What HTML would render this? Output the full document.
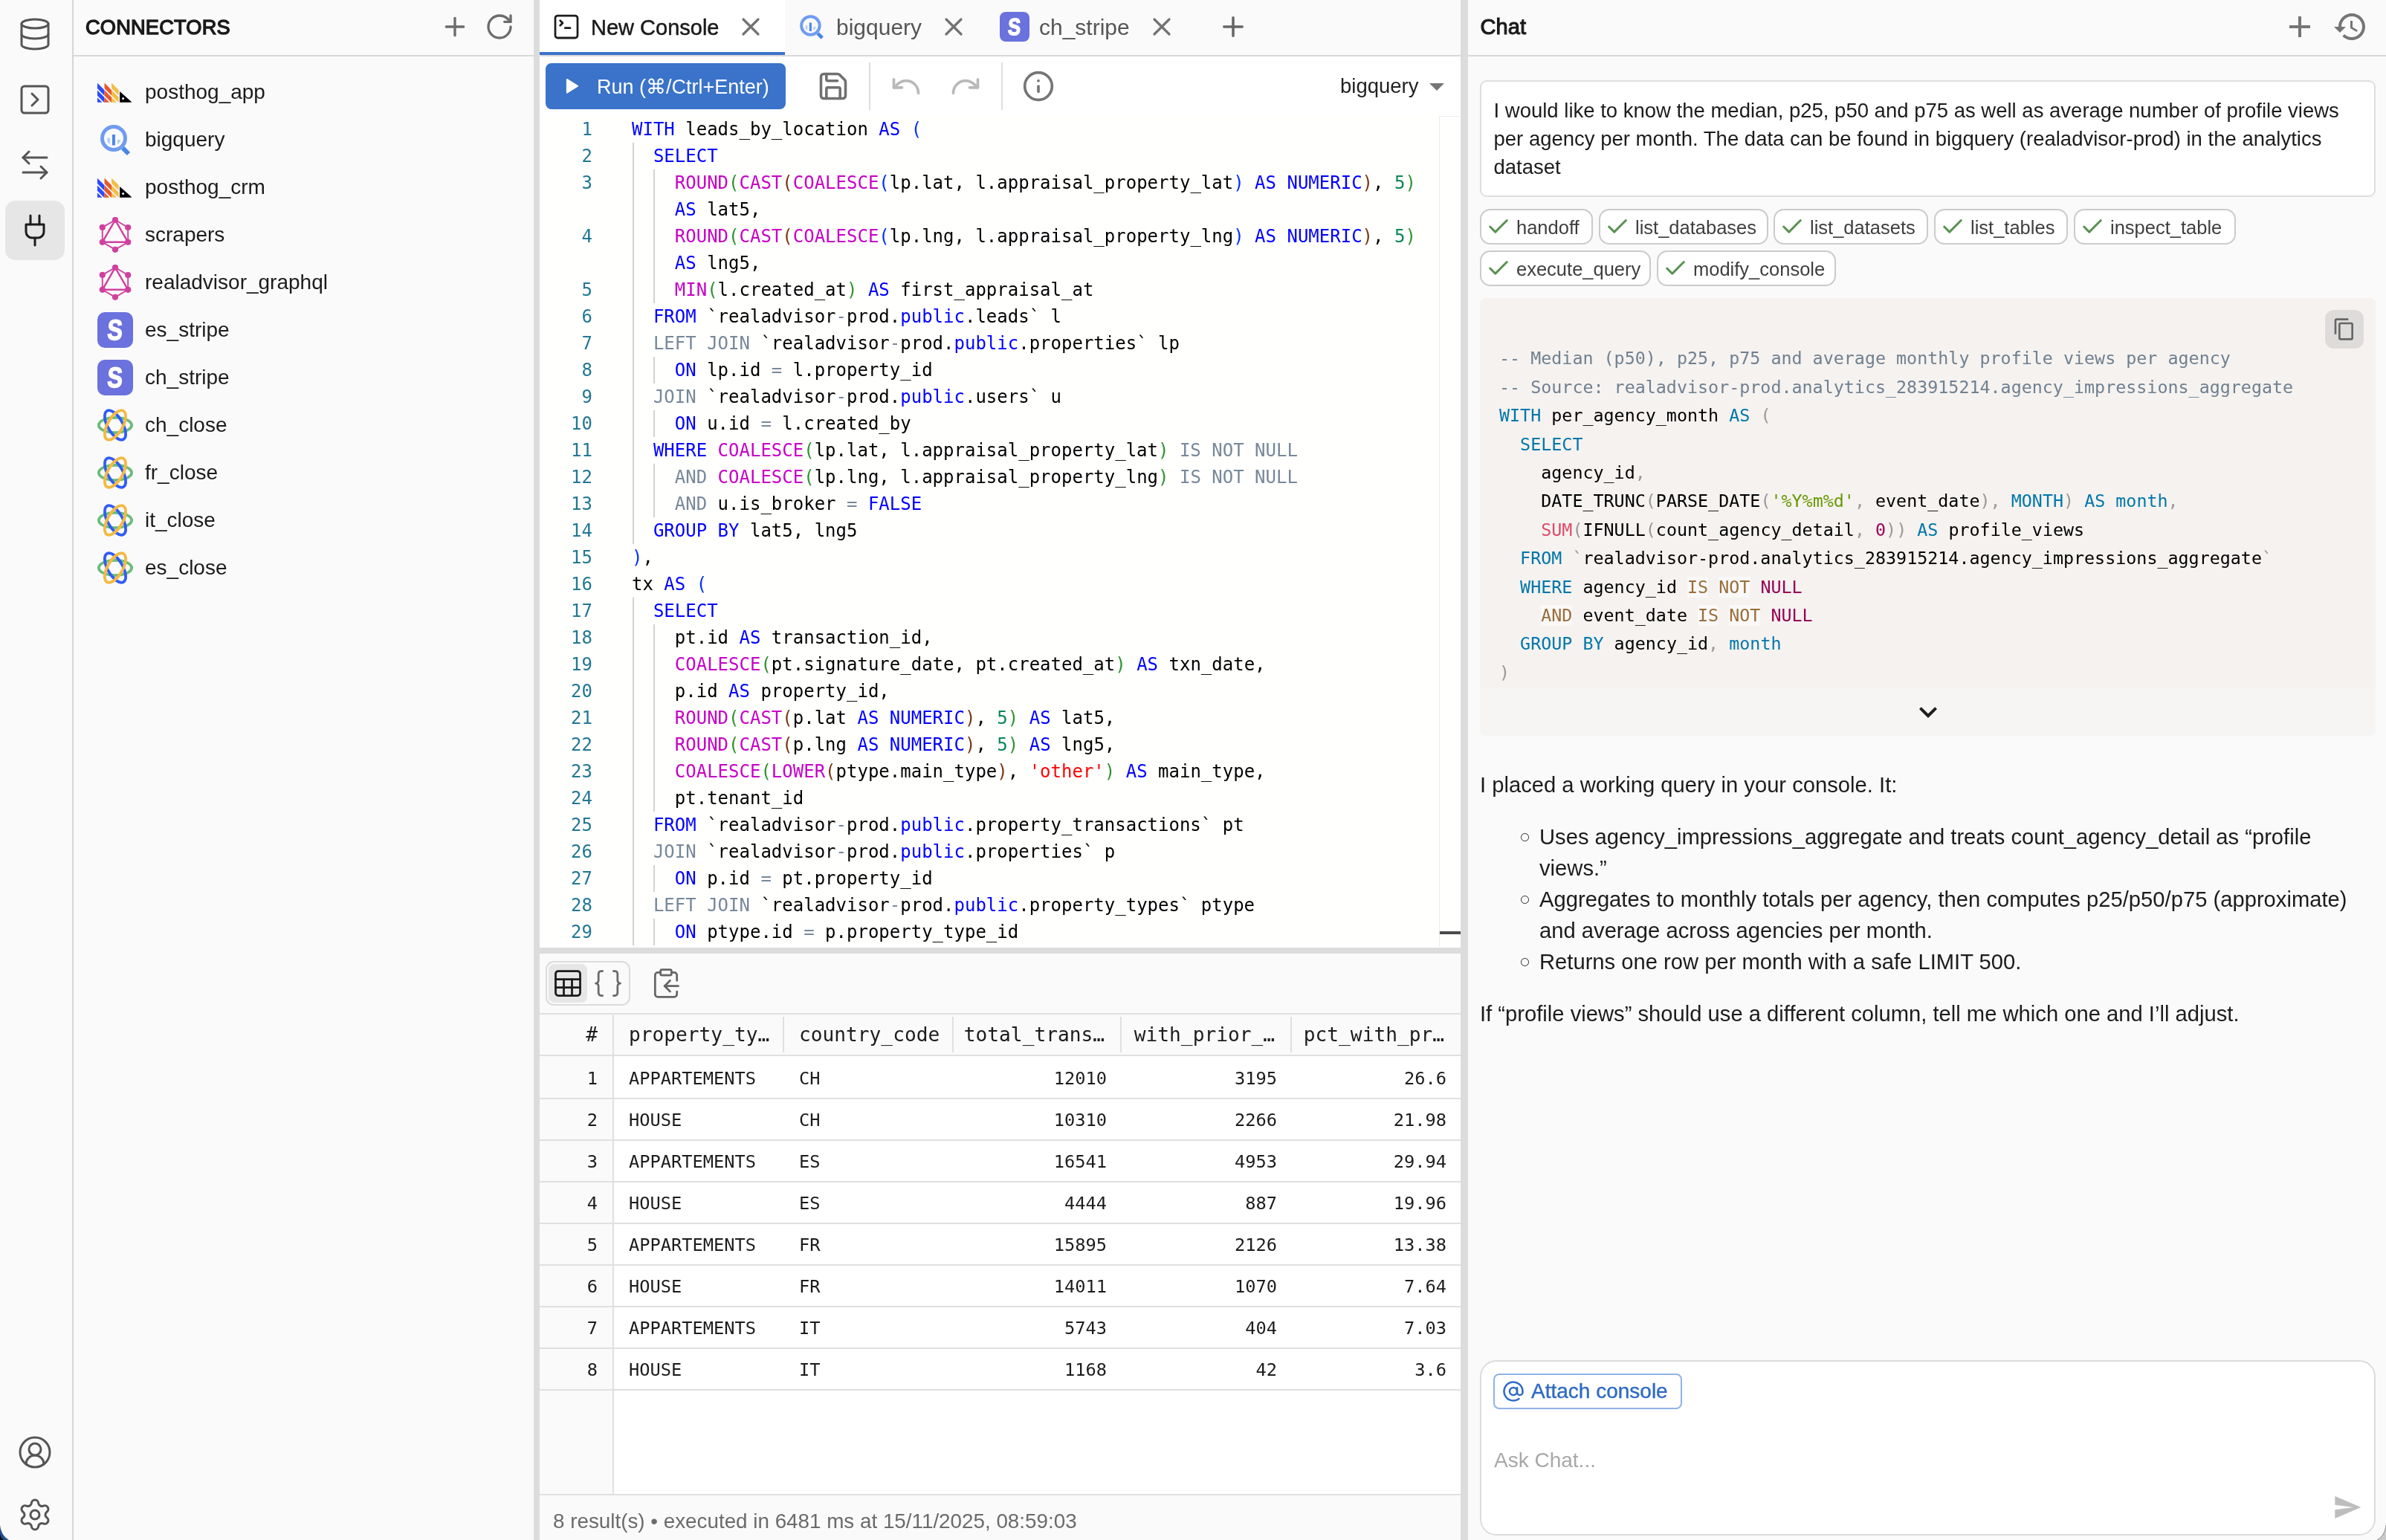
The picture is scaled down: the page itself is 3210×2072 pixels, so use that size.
<!DOCTYPE html>
<html lang="en"><head><meta charset="utf-8"><title>Console</title>
<style>
*{box-sizing:border-box;margin:0;padding:0}
html,body{width:3210px;height:2072px;background:#fafafa}
body{font-family:"Liberation Sans",sans-serif;font-size:28px;color:#1c1c1c;position:relative}
svg{display:block}
.abs{position:absolute}
#rail,#conn,#ed,#chat{will-change:transform;overflow:hidden}
.ic{fill:none;stroke:currentColor;stroke-width:1.5;stroke-linecap:round;stroke-linejoin:round}
/* rail */
#rail{position:absolute;left:0;top:0;width:99px;height:2072px;background:#fafafa;border-right:2px solid #d6d6d6}
#rail svg{position:absolute;left:23px;width:48px;height:48px;color:#555}
#rail .sel{position:absolute;left:7px;top:270px;width:80px;height:80px;border-radius:14px;background:#e6e6e6}
/* connectors */
#conn{position:absolute;left:99px;top:0;width:619px;height:2072px;background:#fafafa}
.hdr{position:absolute;left:0;top:0;right:0;height:76px;border-bottom:2px solid #d9d9d9}
#conn .title{position:absolute;left:16px;top:0;line-height:73px;font-weight:400;font-size:27.2px;letter-spacing:.2px;color:#1a1a1a;-webkit-text-stroke:1.35px #1a1a1a}
#conn .hdr svg{position:absolute;top:16px;width:40px;height:40px;color:#6c6c6c;stroke-width:2}
.row{position:absolute;left:0;height:64px;width:619px}
.row svg,.row .sq{position:absolute;left:32px;top:8px;width:48px;height:48px}
.row span{position:absolute;left:96px;top:0;line-height:64px;font-size:28px;color:#1c1c1c;white-space:nowrap}
.sq{background:#6b71dd;border-radius:10px;color:#fff;font-weight:700;font-size:38.4px;text-align:center;line-height:48px}
.sq b{display:inline-block;transform:scaleX(.8) skewX(-4deg);-webkit-text-stroke:1.5px #fff}
.split{position:absolute;background:#dcdcdc}
/* editor */
#ed{position:absolute;left:726px;top:0;width:1239px;height:2072px;background:#fafafa}
#tabs{position:absolute;left:1px;top:0;right:0;box-shadow:-1px 0 0 #fafafa;height:76px;border-bottom:2px solid #d9d9d9;background:#fafafa}
.tab{position:absolute;top:0;height:74px;line-height:74px;font-size:28px;white-space:nowrap}
.tab.act{background:#fff;border-bottom:4px solid #3b74cb;color:#1a1a1a}
#tb{position:absolute;left:1px;top:76px;right:0;height:80px;background:#fff;box-shadow:-1px 0 0 #fff}
#run{position:absolute;left:7px;top:9px;width:323px;height:62px;border-radius:8px;background:#3a73c9;color:#fff;font-size:27px;line-height:62px;white-space:nowrap}
#code{position:absolute;left:1px;box-shadow:-1px 0 0 #fffffe;top:156px;width:1238px;height:1119px;background:#fffffe;overflow:hidden;font-family:"DejaVu Sans Mono","Liberation Mono",monospace;font-size:24px;line-height:36px}
.ln{position:absolute;left:0;width:70px;text-align:right;color:#237893;height:36px}
.cl{position:absolute;left:123px;height:36px;white-space:pre;color:#000}
.g{position:absolute;width:2px;background:#d3d3d3}
.k{color:#0000ff}.o{color:#778899}.p{color:#c700c7}.s{color:#ff0000}.n{color:#098658}
.b1{color:#0431fa}.b2{color:#319331}.b3{color:#7b3814}
/* results */
#res{position:absolute;left:1px;box-shadow:-1px 0 0 #fafafa;top:1283px;width:1238px;height:789px;background:#fafafa}
#tbl{position:absolute;left:0;top:82px;width:1238px;font-family:"DejaVu Sans Mono","Liberation Mono",monospace}
.tr{position:absolute;left:0;width:1238px;height:56px;border-bottom:2px solid #e0e0e0;background:#fff}
.tr div{position:absolute;top:0;height:54px;line-height:54px;font-size:25px;white-space:nowrap;color:#1c1c1c}
/* chat */
#chat{position:absolute;left:1975px;top:0;width:1235px;height:2072px;background:#fafafa}
#chat .title{position:absolute;left:16.5px;top:0;line-height:72px;font-weight:400;font-size:29px;letter-spacing:.1px;color:#1a1a1a;-webkit-text-stroke:1.1px #1a1a1a}
#umsg{position:absolute;left:16px;top:108px;width:1205px;height:157px;border:2px solid #dedede;border-radius:9px;background:#fff;padding:20px 17px 0 16.5px;font-size:27.5px;line-height:38px;color:#1c1c1c}
.chip{position:absolute;height:48px;border:2px solid #cbcbcb;border-radius:14px;background:#fff;font-size:25.5px;line-height:44px;color:#3e3e3e;white-space:nowrap}
.chip svg{position:absolute;left:6px;top:5px;width:34px;height:34px;color:#5a9152;stroke-width:2.1}
.chip span{position:absolute;left:47px;top:1px}
#cb{position:absolute;left:16px;top:401px;width:1205px;height:525px;background:#f5f2f0;border-radius:8px 8px 0 0;font-family:"DejaVu Sans Mono","Liberation Mono",monospace;font-size:23.35px;line-height:38.4px}
#cb .l{position:absolute;left:26px;white-space:pre;color:#000;height:38.4px}
.c{color:#708090}.pk{color:#0077aa}.pp{color:#999}.ps{color:#669900}.pn{color:#990055}.pf{color:#dd4a68}.po{color:#9a6e3a;background:rgba(255,255,255,.5)}
#cbx{position:absolute;left:16px;top:926px;width:1205px;height:64px;background:#f6f5f4;border-radius:0 0 8px 8px}
.md{position:absolute;font-size:29.2px;line-height:42px;color:#1c1c1c;white-space:nowrap}
#inp{position:absolute;left:16px;top:1830px;width:1205px;height:236px;border:2px solid #dcdcdc;border-radius:22px;background:#fff}
#att{position:absolute;left:16px;top:16px;width:254px;height:48px;border:2px solid #8fb3e8;border-radius:8px;color:#2f6bc4;font-size:28px;line-height:44px;font-weight:400}
</style></head>
<body>
<div id="rail"><div class="sel"></div>
<svg class="ic" viewBox="0 0 24 24" style="top:22px;"><ellipse cx="12" cy="5" rx="9" ry="3"/><path d="M3 5V19A9 3 0 0 0 21 19V5"/><path d="M3 12A9 3 0 0 0 21 12"/></svg>
<svg class="ic" viewBox="0 0 24 24" style="top:110px;"><rect width="18" height="18" x="3" y="3" rx="2"/><path d="m10 8 4 4-4 4"/></svg>
<svg class="ic" viewBox="0 0 24 24" style="top:198px;"><path d="M8 3 4 7l4 4"/><path d="M4 7h16"/><path d="m16 21 4-4-4-4"/><path d="M20 17H4"/></svg>
<svg class="ic" viewBox="0 0 24 24" style="top:286px;color:#1c1c1c;"><path d="M12 22v-5"/><path d="M9 8V2"/><path d="M15 8V2"/><path d="M18 8v5a4 4 0 0 1-4 4h-4a4 4 0 0 1-4-4V8Z"/></svg>
<svg class="ic" viewBox="0 0 24 24" style="top:1930px;"><path d="M18 20a6 6 0 0 0-12 0"/><circle cx="12" cy="10" r="4"/><circle cx="12" cy="12" r="10"/></svg>
<svg class="ic" viewBox="0 0 24 24" style="top:2014px;"><path d="M9.671 4.136a2.34 2.34 0 0 1 4.659 0 2.34 2.34 0 0 0 3.319 1.915 2.34 2.34 0 0 1 2.33 4.033 2.34 2.34 0 0 0 0 3.831 2.34 2.34 0 0 1-2.33 4.033 2.34 2.34 0 0 0-3.319 1.915 2.34 2.34 0 0 1-4.659 0 2.34 2.34 0 0 0-3.32-1.915 2.34 2.34 0 0 1-2.33-4.033 2.34 2.34 0 0 0 0-3.831A2.34 2.34 0 0 1 6.35 6.051a2.34 2.34 0 0 0 3.319-1.915"/><circle cx="12" cy="12" r="3"/></svg>
</div>
<div id="conn"><div class="hdr"><div class="title">CONNECTORS</div>
<svg class="ic" viewBox="0 0 24 24" style="left:493px;top:16px"><path d="M5 12h14"/><path d="M12 5v14"/></svg>
<svg class="ic" viewBox="0 0 24 24" style="left:553px"><path d="M21 12a9 9 0 1 1-9-9c2.52 0 4.93 1 6.74 2.74L21 8"/><path d="M21 3v5h-5"/></svg>
</div>
<div class="row" style="top:92px">
<svg viewBox="0 0 48 48"><g transform="translate(0 11.8)"><path fill="#2b4bff" d="M0.00 0.00 9.55 9.55 9.55 16.85 0.00 7.30zM0.00 9.75 9.55 19.30 9.55 26.00 8.95 26.00 0.00 17.05zM0.00 19.50 6.50 26.00 0.00 26.00z"/><path fill="#e8582a" d="M9.55 -0.20 19.10 9.35 19.10 16.65 9.55 7.10zM9.55 9.55 19.10 19.10 19.10 26.00 18.70 26.00 9.55 16.85zM9.55 19.30 16.25 26.00 9.55 26.00z"/><path fill="#f4bd48" d="M19.10 -0.40 28.65 9.15 28.65 16.45 19.10 6.90zM19.10 9.35 28.65 18.90 28.65 26.00 28.45 26.00 19.10 16.65zM19.10 19.10 26.00 26.00 19.10 26.00z"/><path fill="#000" d="M30.1 11.1 44.8 24.2Q46 25.3 46 26H30.1z"/><circle cx="34.6" cy="20.8" r="1.5" fill="#fff"/></g></svg>
<span>posthog_app</span></div>
<div class="row" style="top:156px">
<svg viewBox="0 0 48 48"><path d="M34.2 35.2 42 43" stroke="#4a86ea" stroke-width="6" stroke-linecap="butt"/><circle cx="22" cy="22" r="15.5" fill="none" stroke="#6f9cf1" stroke-width="5"/><path d="M13.5 21.8h3.4v8.2a12 12 0 0 1-3.4-3.2z" fill="#b4cdf9"/><rect x="20" y="17" width="3.9" height="14.5" fill="#4a86ea"/><path d="M27 23.9h3.8v2.6a12 12 0 0 1-3.8 3.6z" fill="#b4cdf9"/></svg>
<span>bigquery</span></div>
<div class="row" style="top:220px">
<svg viewBox="0 0 48 48"><g transform="translate(0 11.8)"><path fill="#2b4bff" d="M0.00 0.00 9.55 9.55 9.55 16.85 0.00 7.30zM0.00 9.75 9.55 19.30 9.55 26.00 8.95 26.00 0.00 17.05zM0.00 19.50 6.50 26.00 0.00 26.00z"/><path fill="#e8582a" d="M9.55 -0.20 19.10 9.35 19.10 16.65 9.55 7.10zM9.55 9.55 19.10 19.10 19.10 26.00 18.70 26.00 9.55 16.85zM9.55 19.30 16.25 26.00 9.55 26.00z"/><path fill="#f4bd48" d="M19.10 -0.40 28.65 9.15 28.65 16.45 19.10 6.90zM19.10 9.35 28.65 18.90 28.65 26.00 28.45 26.00 19.10 16.65zM19.10 19.10 26.00 26.00 19.10 26.00z"/><path fill="#000" d="M30.1 11.1 44.8 24.2Q46 25.3 46 26H30.1z"/><circle cx="34.6" cy="20.8" r="1.5" fill="#fff"/></g></svg>
<span>posthog_crm</span></div>
<div class="row" style="top:284px">
<svg viewBox="0 0 48 48"><g fill="none" stroke="#d0409f"><polygon points="24.0,4.0 41.2,14.0 41.2,33.8 24.0,43.8 6.8,33.8 6.8,13.9" stroke-width="1.9"/><polygon points="24.0,4.0 41.2,33.8 6.8,33.8" stroke-width="2.4"/></g><circle cx="24.0" cy="4.0" r="4.1" fill="#d0409f"/><circle cx="41.2" cy="14.0" r="4.1" fill="#d0409f"/><circle cx="41.2" cy="33.8" r="4.1" fill="#d0409f"/><circle cx="24.0" cy="43.8" r="4.1" fill="#d0409f"/><circle cx="6.8" cy="33.8" r="4.1" fill="#d0409f"/><circle cx="6.8" cy="13.9" r="4.1" fill="#d0409f"/></svg>
<span>scrapers</span></div>
<div class="row" style="top:348px">
<svg viewBox="0 0 48 48"><g fill="none" stroke="#d0409f"><polygon points="24.0,4.0 41.2,14.0 41.2,33.8 24.0,43.8 6.8,33.8 6.8,13.9" stroke-width="1.9"/><polygon points="24.0,4.0 41.2,33.8 6.8,33.8" stroke-width="2.4"/></g><circle cx="24.0" cy="4.0" r="4.1" fill="#d0409f"/><circle cx="41.2" cy="14.0" r="4.1" fill="#d0409f"/><circle cx="41.2" cy="33.8" r="4.1" fill="#d0409f"/><circle cx="24.0" cy="43.8" r="4.1" fill="#d0409f"/><circle cx="6.8" cy="33.8" r="4.1" fill="#d0409f"/><circle cx="6.8" cy="13.9" r="4.1" fill="#d0409f"/></svg>
<span>realadvisor_graphql</span></div>
<div class="row" style="top:412px">
<div class="sq"><b>S</b></div>
<span>es_stripe</span></div>
<div class="row" style="top:476px">
<div class="sq"><b>S</b></div>
<span>ch_stripe</span></div>
<div class="row" style="top:540px">
<svg viewBox="0 0 48 48"><g fill="none" stroke-width="3.8"><ellipse cx="24" cy="24" rx="22.1" ry="10.1" stroke="#6cbb7a"/><ellipse cx="24" cy="24" rx="22.1" ry="10.1" stroke="#2f5cf6" transform="rotate(60 24 24)"/><ellipse cx="24" cy="24" rx="22.1" ry="10.1" stroke="#f4b942" transform="rotate(-60 24 24)"/></g></svg>
<span>ch_close</span></div>
<div class="row" style="top:604px">
<svg viewBox="0 0 48 48"><g fill="none" stroke-width="3.8"><ellipse cx="24" cy="24" rx="22.1" ry="10.1" stroke="#6cbb7a"/><ellipse cx="24" cy="24" rx="22.1" ry="10.1" stroke="#2f5cf6" transform="rotate(60 24 24)"/><ellipse cx="24" cy="24" rx="22.1" ry="10.1" stroke="#f4b942" transform="rotate(-60 24 24)"/></g></svg>
<span>fr_close</span></div>
<div class="row" style="top:668px">
<svg viewBox="0 0 48 48"><g fill="none" stroke-width="3.8"><ellipse cx="24" cy="24" rx="22.1" ry="10.1" stroke="#6cbb7a"/><ellipse cx="24" cy="24" rx="22.1" ry="10.1" stroke="#2f5cf6" transform="rotate(60 24 24)"/><ellipse cx="24" cy="24" rx="22.1" ry="10.1" stroke="#f4b942" transform="rotate(-60 24 24)"/></g></svg>
<span>it_close</span></div>
<div class="row" style="top:732px">
<svg viewBox="0 0 48 48"><g fill="none" stroke-width="3.8"><ellipse cx="24" cy="24" rx="22.1" ry="10.1" stroke="#6cbb7a"/><ellipse cx="24" cy="24" rx="22.1" ry="10.1" stroke="#2f5cf6" transform="rotate(60 24 24)"/><ellipse cx="24" cy="24" rx="22.1" ry="10.1" stroke="#f4b942" transform="rotate(-60 24 24)"/></g></svg>
<span>es_close</span></div>
</div>
<div class="split" style="left:718px;top:0;width:8px;height:2072px"></div>
<div id="ed">
<div id="tabs">
  <div class="tab act" style="left:-1px;width:330px"><svg class="ic" viewBox="0 0 24 24" style="position:absolute;left:16px;top:16px;width:40px;height:40px;color:#1c1c1c;stroke-width:1.65"><path d="m7 11 2-2-2-2"/><path d="M11 13h4"/><rect width="18" height="18" x="3" y="3" rx="2" ry="2"/></svg><span id="t1" style="position:absolute;left:69px;font-size:29px;-webkit-text-stroke:.5px #1a1a1a">New Console</span><svg class="ic" viewBox="0 0 24 24" style="position:absolute;left:264px;top:16px;width:40px;height:40px;color:#737373;stroke-width:1.95"><path d="M18 6 6 18"/><path d="m6 6 12 12"/></svg></div>
  <div class="tab" style="left:329px;width:270px;color:#555"><svg viewBox="0 0 48 48" style="position:absolute;left:346px;top:17px;width:38px;height:38px;left:17px"><path d="M34.2 35.2 42 43" stroke="#4a86ea" stroke-width="6" stroke-linecap="butt"/><circle cx="22" cy="22" r="15.5" fill="none" stroke="#6f9cf1" stroke-width="5"/><path d="M13.5 21.8h3.4v8.2a12 12 0 0 1-3.4-3.2z" fill="#b4cdf9"/><rect x="20" y="17" width="3.9" height="14.5" fill="#4a86ea"/><path d="M27 23.9h3.8v2.6a12 12 0 0 1-3.8 3.6z" fill="#b4cdf9"/></svg><span id="t2" style="position:absolute;left:69px;font-size:30px">bigquery</span><svg class="ic" viewBox="0 0 24 24" style="position:absolute;left:207px;top:16px;width:40px;height:40px;color:#737373;stroke-width:1.95"><path d="M18 6 6 18"/><path d="m6 6 12 12"/></svg></div>
  <div class="tab" style="left:599px;width:280px;color:#555"><div class="sq" style="position:absolute;left:19px;top:16px;width:40px;height:40px;line-height:40px;font-size:32px;border-radius:8px"><b>S</b></div><span id="t3" style="position:absolute;left:72px;font-size:30px">ch_stripe</span><svg class="ic" viewBox="0 0 24 24" style="position:absolute;left:217px;top:16px;width:40px;height:40px;color:#737373;stroke-width:1.95"><path d="M18 6 6 18"/><path d="m6 6 12 12"/></svg></div>
  <svg class="ic" viewBox="0 0 24 24" style="position:absolute;left:911px;top:15px;width:42px;height:42px;color:#666;stroke-width:2"><path d="M5 12h14"/><path d="M12 5v14"/></svg>
</div>
<div id="tb">
  <div id="run"><svg viewBox="0 0 20 24" style="position:absolute;left:27px;top:20px;width:18px;height:21.6px"><path d="M2 2 18 12 2 22z" fill="#fff" stroke="#fff" stroke-width="2" stroke-linejoin="round"/></svg><span id="runt" style="position:absolute;left:69px;top:1px">Run (&#8984;/Ctrl+Enter)</span></div>
  <svg class="ic" viewBox="0 0 24 24" style="position:absolute;left:372px;top:18px;width:44px;height:44px;color:#707070;stroke-width:1.95"><path d="M15.2 3a2 2 0 0 1 1.4.6l3.8 3.8a2 2 0 0 1 .6 1.4V19a2 2 0 0 1-2 2H5a2 2 0 0 1-2-2V5a2 2 0 0 1 2-2z"/><path d="M17 21v-7a1 1 0 0 0-1-1H8a1 1 0 0 0-1 1v7"/><path d="M7 3v4a1 1 0 0 0 1 1h7"/></svg>
  <div class="abs" style="left:442px;top:8px;width:2px;height:64px;background:#dedede"></div>
  <svg class="ic" viewBox="0 0 24 24" style="position:absolute;left:470px;top:18px;width:44px;height:44px;color:#b9b9b9;stroke-width:2"><path d="M3 7v6h6"/><path d="M21 17a9 9 0 0 0-9-9 9 9 0 0 0-6 2.3L3 13"/></svg>
  <svg class="ic" viewBox="0 0 24 24" style="position:absolute;left:550px;top:18px;width:44px;height:44px;color:#b9b9b9;stroke-width:2"><path d="M21 7v6h-6"/><path d="M3 17a9 9 0 0 1 9-9 9 9 0 0 1 6 2.3l3 2.7"/></svg>
  <div class="abs" style="left:620px;top:8px;width:2px;height:64px;background:#dedede"></div>
  <svg class="ic" viewBox="0 0 24 24" style="position:absolute;left:648px;top:18px;width:44px;height:44px;color:#757575;stroke-width:2"><circle cx="12" cy="12" r="10"/><path d="M12 16v-4"/><path d="M12 8h.01"/></svg>
  <span id="sel" style="position:absolute;left:1076px;top:0;line-height:80px;font-size:27.5px;color:#222">bigquery</span>
  <svg viewBox="0 0 24 24" style="position:absolute;left:1182px;top:16px;width:48px;height:48px;color:#757575"><path fill="currentColor" d="M7 10l5 5 5-5z"/></svg>
</div>

<div id="code"><div class="ln" style="top:0px">1</div><div class="cl" style="top:0px;left:123.00px"><span class="k">WITH</span> leads_by_location <span class="k">AS</span> <span class="b1">(</span></div><div class="ln" style="top:36px">2</div><div class="cl" style="top:36px;left:151.90px"><span class="k">SELECT</span></div><div class="g" style="left:123.5px;top:36px;height:36px"></div><div class="ln" style="top:72px">3</div><div class="cl" style="top:72px;left:180.80px"><span class="p">ROUND</span><span class="b2">(</span><span class="p">CAST</span><span class="b3">(</span><span class="p">COALESCE</span><span class="b1">(</span>lp.lat, l.appraisal_property_lat<span class="b1">)</span> <span class="k">AS</span> <span class="k">NUMERIC</span><span class="b3">)</span>, <span class="n">5</span><span class="b2">)</span></div><div class="g" style="left:123.5px;top:72px;height:36px"></div><div class="g" style="left:152.4px;top:72px;height:36px"></div><div class="cl" style="top:108px;left:180.80px"><span class="k">AS</span> lat5,</div><div class="g" style="left:123.5px;top:108px;height:36px"></div><div class="g" style="left:152.4px;top:108px;height:36px"></div><div class="ln" style="top:144px">4</div><div class="cl" style="top:144px;left:180.80px"><span class="p">ROUND</span><span class="b2">(</span><span class="p">CAST</span><span class="b3">(</span><span class="p">COALESCE</span><span class="b1">(</span>lp.lng, l.appraisal_property_lng<span class="b1">)</span> <span class="k">AS</span> <span class="k">NUMERIC</span><span class="b3">)</span>, <span class="n">5</span><span class="b2">)</span></div><div class="g" style="left:123.5px;top:144px;height:36px"></div><div class="g" style="left:152.4px;top:144px;height:36px"></div><div class="cl" style="top:180px;left:180.80px"><span class="k">AS</span> lng5,</div><div class="g" style="left:123.5px;top:180px;height:36px"></div><div class="g" style="left:152.4px;top:180px;height:36px"></div><div class="ln" style="top:216px">5</div><div class="cl" style="top:216px;left:180.80px"><span class="p">MIN</span><span class="b2">(</span>l.created_at<span class="b2">)</span> <span class="k">AS</span> first_appraisal_at</div><div class="g" style="left:123.5px;top:216px;height:36px"></div><div class="g" style="left:152.4px;top:216px;height:36px"></div><div class="ln" style="top:252px">6</div><div class="cl" style="top:252px;left:151.90px"><span class="k">FROM</span> `realadvisor<span class="o">-</span>prod.<span class="k">public</span>.leads` l</div><div class="g" style="left:123.5px;top:252px;height:36px"></div><div class="ln" style="top:288px">7</div><div class="cl" style="top:288px;left:151.90px"><span class="o">LEFT</span> <span class="o">JOIN</span> `realadvisor<span class="o">-</span>prod.<span class="k">public</span>.properties` lp</div><div class="g" style="left:123.5px;top:288px;height:36px"></div><div class="ln" style="top:324px">8</div><div class="cl" style="top:324px;left:180.80px"><span class="k">ON</span> lp.id <span class="o">=</span> l.property_id</div><div class="g" style="left:123.5px;top:324px;height:36px"></div><div class="g" style="left:152.4px;top:324px;height:36px"></div><div class="ln" style="top:360px">9</div><div class="cl" style="top:360px;left:151.90px"><span class="o">JOIN</span> `realadvisor<span class="o">-</span>prod.<span class="k">public</span>.users` u</div><div class="g" style="left:123.5px;top:360px;height:36px"></div><div class="ln" style="top:396px">10</div><div class="cl" style="top:396px;left:180.80px"><span class="k">ON</span> u.id <span class="o">=</span> l.created_by</div><div class="g" style="left:123.5px;top:396px;height:36px"></div><div class="g" style="left:152.4px;top:396px;height:36px"></div><div class="ln" style="top:432px">11</div><div class="cl" style="top:432px;left:151.90px"><span class="k">WHERE</span> <span class="p">COALESCE</span><span class="b2">(</span>lp.lat, l.appraisal_property_lat<span class="b2">)</span> <span class="o">IS</span> <span class="o">NOT</span> <span class="o">NULL</span></div><div class="g" style="left:123.5px;top:432px;height:36px"></div><div class="ln" style="top:468px">12</div><div class="cl" style="top:468px;left:180.80px"><span class="o">AND</span> <span class="p">COALESCE</span><span class="b2">(</span>lp.lng, l.appraisal_property_lng<span class="b2">)</span> <span class="o">IS</span> <span class="o">NOT</span> <span class="o">NULL</span></div><div class="g" style="left:123.5px;top:468px;height:36px"></div><div class="g" style="left:152.4px;top:468px;height:36px"></div><div class="ln" style="top:504px">13</div><div class="cl" style="top:504px;left:180.80px"><span class="o">AND</span> u.is_broker <span class="o">=</span> <span class="k">FALSE</span></div><div class="g" style="left:123.5px;top:504px;height:36px"></div><div class="g" style="left:152.4px;top:504px;height:36px"></div><div class="ln" style="top:540px">14</div><div class="cl" style="top:540px;left:151.90px"><span class="k">GROUP</span> <span class="k">BY</span> lat5, lng5</div><div class="g" style="left:123.5px;top:540px;height:36px"></div><div class="ln" style="top:576px">15</div><div class="cl" style="top:576px;left:123.00px"><span class="b1">)</span>,</div><div class="ln" style="top:612px">16</div><div class="cl" style="top:612px;left:123.00px">tx <span class="k">AS</span> <span class="b1">(</span></div><div class="ln" style="top:648px">17</div><div class="cl" style="top:648px;left:151.90px"><span class="k">SELECT</span></div><div class="g" style="left:123.5px;top:648px;height:36px"></div><div class="ln" style="top:684px">18</div><div class="cl" style="top:684px;left:180.80px">pt.id <span class="k">AS</span> transaction_id,</div><div class="g" style="left:123.5px;top:684px;height:36px"></div><div class="g" style="left:152.4px;top:684px;height:36px"></div><div class="ln" style="top:720px">19</div><div class="cl" style="top:720px;left:180.80px"><span class="p">COALESCE</span><span class="b2">(</span>pt.signature_date, pt.created_at<span class="b2">)</span> <span class="k">AS</span> txn_date,</div><div class="g" style="left:123.5px;top:720px;height:36px"></div><div class="g" style="left:152.4px;top:720px;height:36px"></div><div class="ln" style="top:756px">20</div><div class="cl" style="top:756px;left:180.80px">p.id <span class="k">AS</span> property_id,</div><div class="g" style="left:123.5px;top:756px;height:36px"></div><div class="g" style="left:152.4px;top:756px;height:36px"></div><div class="ln" style="top:792px">21</div><div class="cl" style="top:792px;left:180.80px"><span class="p">ROUND</span><span class="b2">(</span><span class="p">CAST</span><span class="b3">(</span>p.lat <span class="k">AS</span> <span class="k">NUMERIC</span><span class="b3">)</span>, <span class="n">5</span><span class="b2">)</span> <span class="k">AS</span> lat5,</div><div class="g" style="left:123.5px;top:792px;height:36px"></div><div class="g" style="left:152.4px;top:792px;height:36px"></div><div class="ln" style="top:828px">22</div><div class="cl" style="top:828px;left:180.80px"><span class="p">ROUND</span><span class="b2">(</span><span class="p">CAST</span><span class="b3">(</span>p.lng <span class="k">AS</span> <span class="k">NUMERIC</span><span class="b3">)</span>, <span class="n">5</span><span class="b2">)</span> <span class="k">AS</span> lng5,</div><div class="g" style="left:123.5px;top:828px;height:36px"></div><div class="g" style="left:152.4px;top:828px;height:36px"></div><div class="ln" style="top:864px">23</div><div class="cl" style="top:864px;left:180.80px"><span class="p">COALESCE</span><span class="b2">(</span><span class="p">LOWER</span><span class="b3">(</span>ptype.main_type<span class="b3">)</span>, <span class="s">&#x27;other&#x27;</span><span class="b2">)</span> <span class="k">AS</span> main_type,</div><div class="g" style="left:123.5px;top:864px;height:36px"></div><div class="g" style="left:152.4px;top:864px;height:36px"></div><div class="ln" style="top:900px">24</div><div class="cl" style="top:900px;left:180.80px">pt.tenant_id</div><div class="g" style="left:123.5px;top:900px;height:36px"></div><div class="g" style="left:152.4px;top:900px;height:36px"></div><div class="ln" style="top:936px">25</div><div class="cl" style="top:936px;left:151.90px"><span class="k">FROM</span> `realadvisor<span class="o">-</span>prod.<span class="k">public</span>.property_transactions` pt</div><div class="g" style="left:123.5px;top:936px;height:36px"></div><div class="ln" style="top:972px">26</div><div class="cl" style="top:972px;left:151.90px"><span class="o">JOIN</span> `realadvisor<span class="o">-</span>prod.<span class="k">public</span>.properties` p</div><div class="g" style="left:123.5px;top:972px;height:36px"></div><div class="ln" style="top:1008px">27</div><div class="cl" style="top:1008px;left:180.80px"><span class="k">ON</span> p.id <span class="o">=</span> pt.property_id</div><div class="g" style="left:123.5px;top:1008px;height:36px"></div><div class="g" style="left:152.4px;top:1008px;height:36px"></div><div class="ln" style="top:1044px">28</div><div class="cl" style="top:1044px;left:151.90px"><span class="o">LEFT</span> <span class="o">JOIN</span> `realadvisor<span class="o">-</span>prod.<span class="k">public</span>.property_types` ptype</div><div class="g" style="left:123.5px;top:1044px;height:36px"></div><div class="ln" style="top:1080px">29</div><div class="cl" style="top:1080px;left:180.80px"><span class="k">ON</span> ptype.id <span class="o">=</span> p.property_type_id</div><div class="g" style="left:123.5px;top:1080px;height:36px"></div><div class="g" style="left:152.4px;top:1080px;height:36px"></div></div>
<div class="abs" style="left:1210px;top:156px;width:1px;height:1118px;background:#ececec"></div><div class="abs" style="left:1210px;top:156px;width:28px;height:1px;background:#ececec"></div><div class="abs" style="left:1211px;top:1253px;width:28px;height:4px;background:#4a4a4a"></div>
<div class="split" style="left:0;top:1275px;width:1239px;height:8px"></div>
<div id="res">
<div class="abs" style="left:7px;top:10px;width:114px;height:60px;border:2px solid #dcdcdc;border-radius:11px"></div>
<div class="abs" style="left:11px;top:14px;width:52px;height:52px;border-radius:8px;background:#e6e6e6"></div>
<svg class="ic" viewBox="0 0 24 24" style="position:absolute;left:15px;top:18px;width:44px;height:44px;color:#1a1a1a"><rect width="18" height="18" x="3" y="3" rx="2" ry="2"/><path d="M3 9h18"/><path d="M3 15h18"/><path d="M9 9v12"/><path d="M15 9v12"/></svg>
<svg class="ic" viewBox="0 0 24 24" style="position:absolute;left:69px;top:18px;width:44px;height:44px;color:#6a6a6a"><path d="M8 3H7a2 2 0 0 0-2 2v5a2 2 0 0 1-2 2 2 2 0 0 1 2 2v5c0 1.1.9 2 2 2h1"/><path d="M16 21h1a2 2 0 0 0 2-2v-5c0-1.1.9-2 2-2a2 2 0 0 1-2-2V5a2 2 0 0 0-2-2h-1"/></svg>
<svg class="ic" viewBox="0 0 24 24" style="position:absolute;left:147px;top:18px;width:44px;height:44px;color:#666"><rect width="8" height="4" x="8" y="2" rx="1" ry="1"/><path d="M8 4H6a2 2 0 0 0-2 2v14a2 2 0 0 0 2 2h12a2 2 0 0 0 2-2v-2"/><path d="M16 4h2a2 2 0 0 1 2 2v4"/><path d="M21 14H11"/><path d="m15 10-4 4 4 4"/></svg>
<div class="abs" style="left:-1px;top:80px;width:1239px;height:648px;background:#fff"></div>
<div class="abs" style="left:-1px;top:82px;width:98px;height:646px;background:#fafafa"></div>
<div class="abs" style="left:-1px;top:80px;width:1239px;height:58px;background:#fafafa;border-top:2px solid #e0e0e0;border-bottom:2px solid #e0e0e0"></div>
<div class="abs" style="left:0;width:77px;text-align:right;top:83px;line-height:52px;font-size:26.2px;white-space:nowrap;color:#1c1c1c;font-family:'DejaVu Sans Mono','Liberation Mono',monospace;">#</div>
<div class="abs" style="left:119px;top:83px;line-height:52px;font-size:26.2px;white-space:nowrap;color:#1c1c1c;font-family:'DejaVu Sans Mono','Liberation Mono',monospace;">property_ty…</div>
<div class="abs" style="left:348px;top:83px;line-height:52px;font-size:26.2px;white-space:nowrap;color:#1c1c1c;font-family:'DejaVu Sans Mono','Liberation Mono',monospace;">country_code</div>
<div class="abs" style="left:326px;top:85px;width:2px;height:48px;background:#e0e0e0"></div>
<div class="abs" style="left:554.5px;width:204.5px;text-align:right;top:83px;line-height:52px;font-size:26.2px;white-space:nowrap;color:#1c1c1c;font-family:'DejaVu Sans Mono','Liberation Mono',monospace;">total_trans…</div>
<div class="abs" style="left:553.5px;top:85px;width:2px;height:48px;background:#e0e0e0"></div>
<div class="abs" style="left:781px;width:207px;text-align:right;top:83px;line-height:52px;font-size:26.2px;white-space:nowrap;color:#1c1c1c;font-family:'DejaVu Sans Mono','Liberation Mono',monospace;">with_prior_…</div>
<div class="abs" style="left:780px;top:85px;width:2px;height:48px;background:#e0e0e0"></div>
<div class="abs" style="left:1010px;width:206px;text-align:right;top:83px;line-height:52px;font-size:26.2px;white-space:nowrap;color:#1c1c1c;font-family:'DejaVu Sans Mono','Liberation Mono',monospace;">pct_with_pr…</div>
<div class="abs" style="left:1009px;top:85px;width:2px;height:48px;background:#e0e0e0"></div>
<div class="abs" style="left:-1px;top:194px;width:1239px;height:2px;background:#e0e0e0"></div>
<div class="abs" style="left:0;width:77px;text-align:right;top:140px;line-height:56px;height:54px;font-size:23.7px;white-space:nowrap;color:#1c1c1c;font-family:'DejaVu Sans Mono','Liberation Mono',monospace;">1</div>
<div class="abs" style="left:119px;top:140px;line-height:56px;height:54px;font-size:23.7px;white-space:nowrap;color:#1c1c1c;font-family:'DejaVu Sans Mono','Liberation Mono',monospace;">APPARTEMENTS</div>
<div class="abs" style="left:348px;top:140px;line-height:56px;height:54px;font-size:23.7px;white-space:nowrap;color:#1c1c1c;font-family:'DejaVu Sans Mono','Liberation Mono',monospace;">CH</div>
<div class="abs" style="left:554.5px;width:207.5px;text-align:right;top:140px;line-height:56px;height:54px;font-size:23.7px;white-space:nowrap;color:#1c1c1c;font-family:'DejaVu Sans Mono','Liberation Mono',monospace;">12010</div>
<div class="abs" style="left:781px;width:210px;text-align:right;top:140px;line-height:56px;height:54px;font-size:23.7px;white-space:nowrap;color:#1c1c1c;font-family:'DejaVu Sans Mono','Liberation Mono',monospace;">3195</div>
<div class="abs" style="left:1010px;width:209px;text-align:right;top:140px;line-height:56px;height:54px;font-size:23.7px;white-space:nowrap;color:#1c1c1c;font-family:'DejaVu Sans Mono','Liberation Mono',monospace;">26.6</div>
<div class="abs" style="left:-1px;top:250px;width:1239px;height:2px;background:#e0e0e0"></div>
<div class="abs" style="left:0;width:77px;text-align:right;top:196px;line-height:56px;height:54px;font-size:23.7px;white-space:nowrap;color:#1c1c1c;font-family:'DejaVu Sans Mono','Liberation Mono',monospace;">2</div>
<div class="abs" style="left:119px;top:196px;line-height:56px;height:54px;font-size:23.7px;white-space:nowrap;color:#1c1c1c;font-family:'DejaVu Sans Mono','Liberation Mono',monospace;">HOUSE</div>
<div class="abs" style="left:348px;top:196px;line-height:56px;height:54px;font-size:23.7px;white-space:nowrap;color:#1c1c1c;font-family:'DejaVu Sans Mono','Liberation Mono',monospace;">CH</div>
<div class="abs" style="left:554.5px;width:207.5px;text-align:right;top:196px;line-height:56px;height:54px;font-size:23.7px;white-space:nowrap;color:#1c1c1c;font-family:'DejaVu Sans Mono','Liberation Mono',monospace;">10310</div>
<div class="abs" style="left:781px;width:210px;text-align:right;top:196px;line-height:56px;height:54px;font-size:23.7px;white-space:nowrap;color:#1c1c1c;font-family:'DejaVu Sans Mono','Liberation Mono',monospace;">2266</div>
<div class="abs" style="left:1010px;width:209px;text-align:right;top:196px;line-height:56px;height:54px;font-size:23.7px;white-space:nowrap;color:#1c1c1c;font-family:'DejaVu Sans Mono','Liberation Mono',monospace;">21.98</div>
<div class="abs" style="left:-1px;top:306px;width:1239px;height:2px;background:#e0e0e0"></div>
<div class="abs" style="left:0;width:77px;text-align:right;top:252px;line-height:56px;height:54px;font-size:23.7px;white-space:nowrap;color:#1c1c1c;font-family:'DejaVu Sans Mono','Liberation Mono',monospace;">3</div>
<div class="abs" style="left:119px;top:252px;line-height:56px;height:54px;font-size:23.7px;white-space:nowrap;color:#1c1c1c;font-family:'DejaVu Sans Mono','Liberation Mono',monospace;">APPARTEMENTS</div>
<div class="abs" style="left:348px;top:252px;line-height:56px;height:54px;font-size:23.7px;white-space:nowrap;color:#1c1c1c;font-family:'DejaVu Sans Mono','Liberation Mono',monospace;">ES</div>
<div class="abs" style="left:554.5px;width:207.5px;text-align:right;top:252px;line-height:56px;height:54px;font-size:23.7px;white-space:nowrap;color:#1c1c1c;font-family:'DejaVu Sans Mono','Liberation Mono',monospace;">16541</div>
<div class="abs" style="left:781px;width:210px;text-align:right;top:252px;line-height:56px;height:54px;font-size:23.7px;white-space:nowrap;color:#1c1c1c;font-family:'DejaVu Sans Mono','Liberation Mono',monospace;">4953</div>
<div class="abs" style="left:1010px;width:209px;text-align:right;top:252px;line-height:56px;height:54px;font-size:23.7px;white-space:nowrap;color:#1c1c1c;font-family:'DejaVu Sans Mono','Liberation Mono',monospace;">29.94</div>
<div class="abs" style="left:-1px;top:362px;width:1239px;height:2px;background:#e0e0e0"></div>
<div class="abs" style="left:0;width:77px;text-align:right;top:308px;line-height:56px;height:54px;font-size:23.7px;white-space:nowrap;color:#1c1c1c;font-family:'DejaVu Sans Mono','Liberation Mono',monospace;">4</div>
<div class="abs" style="left:119px;top:308px;line-height:56px;height:54px;font-size:23.7px;white-space:nowrap;color:#1c1c1c;font-family:'DejaVu Sans Mono','Liberation Mono',monospace;">HOUSE</div>
<div class="abs" style="left:348px;top:308px;line-height:56px;height:54px;font-size:23.7px;white-space:nowrap;color:#1c1c1c;font-family:'DejaVu Sans Mono','Liberation Mono',monospace;">ES</div>
<div class="abs" style="left:554.5px;width:207.5px;text-align:right;top:308px;line-height:56px;height:54px;font-size:23.7px;white-space:nowrap;color:#1c1c1c;font-family:'DejaVu Sans Mono','Liberation Mono',monospace;">4444</div>
<div class="abs" style="left:781px;width:210px;text-align:right;top:308px;line-height:56px;height:54px;font-size:23.7px;white-space:nowrap;color:#1c1c1c;font-family:'DejaVu Sans Mono','Liberation Mono',monospace;">887</div>
<div class="abs" style="left:1010px;width:209px;text-align:right;top:308px;line-height:56px;height:54px;font-size:23.7px;white-space:nowrap;color:#1c1c1c;font-family:'DejaVu Sans Mono','Liberation Mono',monospace;">19.96</div>
<div class="abs" style="left:-1px;top:418px;width:1239px;height:2px;background:#e0e0e0"></div>
<div class="abs" style="left:0;width:77px;text-align:right;top:364px;line-height:56px;height:54px;font-size:23.7px;white-space:nowrap;color:#1c1c1c;font-family:'DejaVu Sans Mono','Liberation Mono',monospace;">5</div>
<div class="abs" style="left:119px;top:364px;line-height:56px;height:54px;font-size:23.7px;white-space:nowrap;color:#1c1c1c;font-family:'DejaVu Sans Mono','Liberation Mono',monospace;">APPARTEMENTS</div>
<div class="abs" style="left:348px;top:364px;line-height:56px;height:54px;font-size:23.7px;white-space:nowrap;color:#1c1c1c;font-family:'DejaVu Sans Mono','Liberation Mono',monospace;">FR</div>
<div class="abs" style="left:554.5px;width:207.5px;text-align:right;top:364px;line-height:56px;height:54px;font-size:23.7px;white-space:nowrap;color:#1c1c1c;font-family:'DejaVu Sans Mono','Liberation Mono',monospace;">15895</div>
<div class="abs" style="left:781px;width:210px;text-align:right;top:364px;line-height:56px;height:54px;font-size:23.7px;white-space:nowrap;color:#1c1c1c;font-family:'DejaVu Sans Mono','Liberation Mono',monospace;">2126</div>
<div class="abs" style="left:1010px;width:209px;text-align:right;top:364px;line-height:56px;height:54px;font-size:23.7px;white-space:nowrap;color:#1c1c1c;font-family:'DejaVu Sans Mono','Liberation Mono',monospace;">13.38</div>
<div class="abs" style="left:-1px;top:474px;width:1239px;height:2px;background:#e0e0e0"></div>
<div class="abs" style="left:0;width:77px;text-align:right;top:420px;line-height:56px;height:54px;font-size:23.7px;white-space:nowrap;color:#1c1c1c;font-family:'DejaVu Sans Mono','Liberation Mono',monospace;">6</div>
<div class="abs" style="left:119px;top:420px;line-height:56px;height:54px;font-size:23.7px;white-space:nowrap;color:#1c1c1c;font-family:'DejaVu Sans Mono','Liberation Mono',monospace;">HOUSE</div>
<div class="abs" style="left:348px;top:420px;line-height:56px;height:54px;font-size:23.7px;white-space:nowrap;color:#1c1c1c;font-family:'DejaVu Sans Mono','Liberation Mono',monospace;">FR</div>
<div class="abs" style="left:554.5px;width:207.5px;text-align:right;top:420px;line-height:56px;height:54px;font-size:23.7px;white-space:nowrap;color:#1c1c1c;font-family:'DejaVu Sans Mono','Liberation Mono',monospace;">14011</div>
<div class="abs" style="left:781px;width:210px;text-align:right;top:420px;line-height:56px;height:54px;font-size:23.7px;white-space:nowrap;color:#1c1c1c;font-family:'DejaVu Sans Mono','Liberation Mono',monospace;">1070</div>
<div class="abs" style="left:1010px;width:209px;text-align:right;top:420px;line-height:56px;height:54px;font-size:23.7px;white-space:nowrap;color:#1c1c1c;font-family:'DejaVu Sans Mono','Liberation Mono',monospace;">7.64</div>
<div class="abs" style="left:-1px;top:530px;width:1239px;height:2px;background:#e0e0e0"></div>
<div class="abs" style="left:0;width:77px;text-align:right;top:476px;line-height:56px;height:54px;font-size:23.7px;white-space:nowrap;color:#1c1c1c;font-family:'DejaVu Sans Mono','Liberation Mono',monospace;">7</div>
<div class="abs" style="left:119px;top:476px;line-height:56px;height:54px;font-size:23.7px;white-space:nowrap;color:#1c1c1c;font-family:'DejaVu Sans Mono','Liberation Mono',monospace;">APPARTEMENTS</div>
<div class="abs" style="left:348px;top:476px;line-height:56px;height:54px;font-size:23.7px;white-space:nowrap;color:#1c1c1c;font-family:'DejaVu Sans Mono','Liberation Mono',monospace;">IT</div>
<div class="abs" style="left:554.5px;width:207.5px;text-align:right;top:476px;line-height:56px;height:54px;font-size:23.7px;white-space:nowrap;color:#1c1c1c;font-family:'DejaVu Sans Mono','Liberation Mono',monospace;">5743</div>
<div class="abs" style="left:781px;width:210px;text-align:right;top:476px;line-height:56px;height:54px;font-size:23.7px;white-space:nowrap;color:#1c1c1c;font-family:'DejaVu Sans Mono','Liberation Mono',monospace;">404</div>
<div class="abs" style="left:1010px;width:209px;text-align:right;top:476px;line-height:56px;height:54px;font-size:23.7px;white-space:nowrap;color:#1c1c1c;font-family:'DejaVu Sans Mono','Liberation Mono',monospace;">7.03</div>
<div class="abs" style="left:-1px;top:586px;width:1239px;height:2px;background:#e0e0e0"></div>
<div class="abs" style="left:0;width:77px;text-align:right;top:532px;line-height:56px;height:54px;font-size:23.7px;white-space:nowrap;color:#1c1c1c;font-family:'DejaVu Sans Mono','Liberation Mono',monospace;">8</div>
<div class="abs" style="left:119px;top:532px;line-height:56px;height:54px;font-size:23.7px;white-space:nowrap;color:#1c1c1c;font-family:'DejaVu Sans Mono','Liberation Mono',monospace;">HOUSE</div>
<div class="abs" style="left:348px;top:532px;line-height:56px;height:54px;font-size:23.7px;white-space:nowrap;color:#1c1c1c;font-family:'DejaVu Sans Mono','Liberation Mono',monospace;">IT</div>
<div class="abs" style="left:554.5px;width:207.5px;text-align:right;top:532px;line-height:56px;height:54px;font-size:23.7px;white-space:nowrap;color:#1c1c1c;font-family:'DejaVu Sans Mono','Liberation Mono',monospace;">1168</div>
<div class="abs" style="left:781px;width:210px;text-align:right;top:532px;line-height:56px;height:54px;font-size:23.7px;white-space:nowrap;color:#1c1c1c;font-family:'DejaVu Sans Mono','Liberation Mono',monospace;">42</div>
<div class="abs" style="left:1010px;width:209px;text-align:right;top:532px;line-height:56px;height:54px;font-size:23.7px;white-space:nowrap;color:#1c1c1c;font-family:'DejaVu Sans Mono','Liberation Mono',monospace;">3.6</div>
<div class="abs" style="left:97px;top:82px;width:2px;height:646px;background:#e0e0e0"></div>
<div class="abs" style="left:-1px;top:727px;width:1239px;height:62px;background:#fafafa;border-top:2px solid #e0e0e0"></div>
<div id="foot" class="abs" style="left:17px;top:731px;line-height:66px;font-size:27.8px;color:#6b6b6b;white-space:nowrap">8 result(s) • executed in 6481 ms at 15/11/2025, 08:59:03</div>
</div>
</div>
<div class="split" style="left:1965px;top:0;width:10px;height:2072px"></div>
<div id="chat">
<div class="hdr"><div class="title">Chat</div>
<svg viewBox="0 0 24 24" style="position:absolute;left:1095px;top:12px;width:48px;height:48px;color:#757575"><path fill="currentColor" d="M19 13h-6v6h-2v-6H5v-2h6V5h2v6h6v2z"/></svg>
<svg viewBox="0 0 24 24" style="position:absolute;left:1163px;top:12px;width:48px;height:48px;color:#757575"><path fill="currentColor" d="M13 3c-4.97 0-9 4.03-9 9H1l3.89 3.89.07.14L9 12H6c0-3.87 3.13-7 7-7s7 3.13 7 7-3.13 7-7 7c-1.93 0-3.68-.79-4.94-2.06l-1.42 1.42C8.27 19.99 10.51 21 13 21c4.97 0 9-4.03 9-9s-4.03-9-9-9zm-1 5v5l4.28 2.54.72-1.21-3.5-2.08V8H12z"/></svg>
</div>
<div id="umsg"><span id="u1">I would like to know the median, p25, p50 and p75 as well as average number of profile views</span><br><span id="u2">per agency per month. The data can be found in bigquery (realadvisor-prod) in the analytics</span><br>dataset</div>
<div class="chip" style="left:16px;top:281px;width:152px"><svg class="ic" viewBox="0 0 24 24"><path d="M20 6 9 17l-5-5"/></svg><span>handoff</span></div>
<div class="chip" style="left:176px;top:281px;width:228px"><svg class="ic" viewBox="0 0 24 24"><path d="M20 6 9 17l-5-5"/></svg><span>list_databases</span></div>
<div class="chip" style="left:411px;top:281px;width:208px"><svg class="ic" viewBox="0 0 24 24"><path d="M20 6 9 17l-5-5"/></svg><span>list_datasets</span></div>
<div class="chip" style="left:627px;top:281px;width:180px"><svg class="ic" viewBox="0 0 24 24"><path d="M20 6 9 17l-5-5"/></svg><span>list_tables</span></div>
<div class="chip" style="left:815px;top:281px;width:218px"><svg class="ic" viewBox="0 0 24 24"><path d="M20 6 9 17l-5-5"/></svg><span>inspect_table</span></div>
<div class="chip" style="left:16px;top:337px;width:230px"><svg class="ic" viewBox="0 0 24 24"><path d="M20 6 9 17l-5-5"/></svg><span>execute_query</span></div>
<div class="chip" style="left:254px;top:337px;width:241px"><svg class="ic" viewBox="0 0 24 24"><path d="M20 6 9 17l-5-5"/></svg><span>modify_console</span></div>
<div class="abs" style="left:1153px;top:417px;width:52px;height:52px;border-radius:12px;background:#dedcdb;z-index:3"><svg viewBox="0 0 24 24" style="position:absolute;left:10px;top:10px;width:32px;height:32px;color:#666"><path fill="currentColor" d="M16 1H4c-1.1 0-2 .9-2 2v14h2V3h12V1zm3 4H8c-1.1 0-2 .9-2 2v14c0 1.1.9 2 2 2h11c1.1 0 2-.9 2-2V7c0-1.1-.9-2-2-2zm0 16H8V7h11v14z"/></svg></div>
<div id="cb"><div class="l" style="top:62.3px"><span class="c">-- Median (p50), p25, p75 and average monthly profile views per agency</span></div><div class="l" style="top:100.7px"><span class="c">-- Source: realadvisor-prod.analytics_283915214.agency_impressions_aggregate</span></div><div class="l" style="top:139.1px"><span class="pk">WITH</span> per_agency_month <span class="pk">AS</span> <span class="pp">(</span></div><div class="l" style="top:177.5px">  <span class="pk">SELECT</span></div><div class="l" style="top:215.9px">    agency_id<span class="pp">,</span></div><div class="l" style="top:254.3px">    DATE_TRUNC<span class="pp">(</span>PARSE_DATE<span class="pp">(</span><span class="ps">&#x27;%Y%m%d&#x27;</span><span class="pp">,</span> event_date<span class="pp">)</span><span class="pp">,</span> <span class="pk">MONTH</span><span class="pp">)</span> <span class="pk">AS</span> <span class="pk">month</span><span class="pp">,</span></div><div class="l" style="top:292.7px">    <span class="pf">SUM</span><span class="pp">(</span>IFNULL<span class="pp">(</span>count_agency_detail<span class="pp">,</span> <span class="pn">0</span><span class="pp">)</span><span class="pp">)</span> <span class="pk">AS</span> profile_views</div><div class="l" style="top:331.1px">  <span class="pk">FROM</span> <span class="pp">`</span>realadvisor-prod.analytics_283915214.agency_impressions_aggregate<span class="pp">`</span></div><div class="l" style="top:369.5px">  <span class="pk">WHERE</span> agency_id <span class="po">IS</span> <span class="po">NOT</span> <span class="pn">NULL</span></div><div class="l" style="top:407.9px">    <span class="po">AND</span> event_date <span class="po">IS</span> <span class="po">NOT</span> <span class="pn">NULL</span></div><div class="l" style="top:446.3px">  <span class="pk">GROUP</span> <span class="pk">BY</span> agency_id<span class="pp">,</span> <span class="pk">month</span></div><div class="l" style="top:484.7px"><span class="pp">)</span></div></div>
<div id="cbx"><svg viewBox="0 0 24 24" style="position:absolute;left:579px;top:8px;width:48px;height:48px;color:#1e1e1e"><path fill="currentColor" d="M16.59 8.59 12 13.17 7.41 8.59 6 10l6 6 6-6z"/></svg></div>
<div class="md" id="m1" style="left:16px;top:1035px">I placed a working query in your console. It:</div>
<div class="md" id="b0" style="left:96px;top:1105px">Uses agency_impressions_aggregate and treats count_agency_detail as “profile</div>
<div class="abs" style="left:71px;top:1122px;width:10.5px;height:10.5px;border:1.8px solid #2a2a2a;border-radius:50%;margin-top:-1px"></div>
<div class="md" id="b1" style="left:96px;top:1147px">views.”</div>
<div class="md" id="b2" style="left:96px;top:1189px">Aggregates to monthly totals per agency, then computes p25/p50/p75 (approximate)</div>
<div class="abs" style="left:71px;top:1206px;width:10.5px;height:10.5px;border:1.8px solid #2a2a2a;border-radius:50%;margin-top:-1px"></div>
<div class="md" id="b3" style="left:96px;top:1231px">and average across agencies per month.</div>
<div class="md" id="b4" style="left:96px;top:1273px">Returns one row per month with a safe LIMIT 500.</div>
<div class="abs" style="left:71px;top:1290px;width:10.5px;height:10.5px;border:1.8px solid #2a2a2a;border-radius:50%;margin-top:-1px"></div>
<div class="md" id="m2" style="left:16px;top:1343px">If “profile views” should use a different column, tell me which one and I’ll adjust.</div>
<div id="inp"><div id="att"><svg class="ic" viewBox="0 0 24 24" style="position:absolute;left:10px;top:7px;width:30px;height:30px;stroke-width:2"><circle cx="12" cy="12" r="4"/><path d="M16 8v5a3 3 0 0 0 6 0v-1a10 10 0 1 0-4 8"/></svg><span style="position:absolute;left:49px;-webkit-text-stroke:.4px #2f6bc4" id="attt">Attach console</span></div>
<div class="abs" id="ph" style="left:17px;top:112px;line-height:42px;font-size:28px;color:#a8a8a8">Ask Chat...</div>
<svg viewBox="0 0 24 24" style="position:absolute;left:1145px;top:176px;width:40px;height:40px;color:#bdbdbd"><path fill="currentColor" d="M2.01 21L23 12 2.01 3 2 10l15 2-15 2z"/></svg>
</div>
</div>
<svg class="abs" style="left:0;top:2052px;width:14px;height:20px;z-index:9" viewBox="0 0 14 20"><path d="M0 0C1 9 5 16 12 20H0z" fill="#1f4f8f"/><path d="M0 12C1 16 3 18.5 5 20H0z" fill="#111"/></svg>
<svg class="abs" style="left:3196px;top:2052px;width:14px;height:20px;z-index:9" viewBox="0 0 14 20"><path d="M14 0C13 9 9 16 2 20H14z" fill="#c9c9c9"/><path d="M14 0C13 9 9 16 2 20" fill="none" stroke="#8a8a8a" stroke-width="1"/></svg>
</body></html>
